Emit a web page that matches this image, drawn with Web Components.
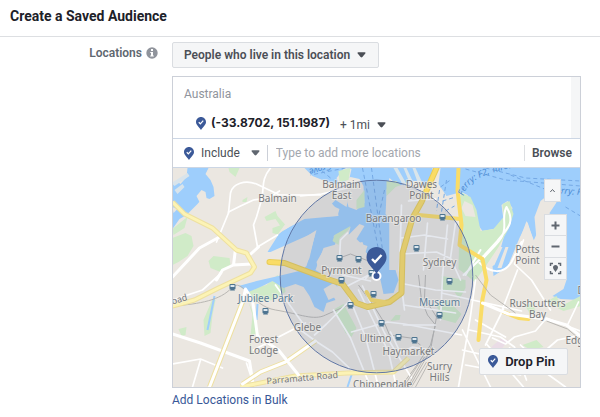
<!DOCTYPE html>
<html lang="en">
<head>
<meta charset="utf-8">
<title>Create a Saved Audience</title>
<style>
body { margin: 0; background: #fff; color: #4b4f56; font: 12px/16px Roboto, "Liberation Sans", sans-serif; }
</style>
</head>
<body>
<audience-page></audience-page>
<script>
function define(name, html) {
  const template = document.createElement('template');
  template.innerHTML = html;
  customElements.define(name, class extends HTMLElement {
    connectedCallback() {
      if (this.shadowRoot) return;
      this.attachShadow({ mode: 'open' }).append(template.content.cloneNode(true));
    }
  });
}

define('pin-icon', `
<style>
:host { display: inline-block; flex: none; width: 10px; height: 13px; }
svg { display: block; width: 100%; height: 100%; }
</style>
<svg viewBox="0 0 20 26" aria-hidden="true">
  <path d="M10 0C4.500 0 0 4.300 0 9.800C0 15.500 5.500 18.500 10 26C14.500 18.500 20 15.500 20 9.800C20 4.300 15.500 0 10 0Z" fill="#3b5998"/>
  <path d="M5.500 10.500L8.700 13.600L14.500 7.200" fill="none" stroke="#fff" stroke-width="2.400"/>
</svg>`);

define('caret-icon', `
<style>
:host { display: inline-block; flex: none; width: 9px; height: 6px; }
svg { display: block; width: 100%; height: 100%; }
</style>
<svg viewBox="0 0 10 6" aria-hidden="true"><path d="M1.500 0H8.500Q10 0 9.200 1.300L6 5.300Q5 6.300 4 5.300L.8 1.300Q0 0 1.500 0Z" fill="currentColor"/></svg>`);

define('page-header', `
<style>
:host { display: block; padding: 8px 10px 11px; border-bottom: 1px solid #dddfe2; }
h1 { margin: 0; font-size: 14px; line-height: 17px; font-weight: 700; color: #1d2129; }
</style>
<h1><slot></slot></h1>`);

define('form-row', `
<style>
:host { display: flex; gap: 14px; padding: 5px 19px 8px 0; }
.label { flex: none; width: 158px; box-sizing: border-box; padding-top: 3px; display: flex; justify-content: flex-end; align-items: flex-start; gap: 4px; font-weight: 600; color: #606770; }
svg { width: 12px; height: 12px; margin-top: 2px; }
.body { flex: 1; min-width: 0; }
</style>
<div class="label"><slot name="label"></slot>
  <svg viewBox="0 0 12 12" aria-hidden="true"><circle cx="6" cy="6" r="5.700" fill="#90949c"/><path d="M5 2h2v2H5zM4.300 5H7v3.500h.8v1H4.200v-1H5V6h-.7z" fill="#fff"/></svg>
</div>
<div class="body"><slot></slot></div>`);

define('menu-button', `
<style>
:host { display: block; margin-bottom: 8px; }
button { font: inherit; font-weight: 600; color: #4b4f56; background: #f5f6f7; border: 1px solid #dadde1; border-radius: 2px; padding: 4px 12px 4px 11px; height: 26px; display: inline-flex; align-items: center; gap: 7px; vertical-align: top; }
</style>
<button type="button" aria-haspopup="menu"><slot></slot><caret-icon></caret-icon></button>`);

define('location-list', `
<style>
:host { display: flex; border-bottom: 1px solid #ccd6e4; }
.items { flex: 1; min-width: 0; padding: 10px 11px 4px; }
.country { line-height: 15px; color: #90949c; }
.place { display: flex; align-items: center; gap: 5px; padding: 10px 0 0 12px; line-height: 18px; }
strong { color: #1d2129; font-size: 12px; font-family: Inter, Roboto, sans-serif; font-weight: 700; }
button { font: inherit; color: #4b4f56; background: none; border: 0; padding: 4px 0 0; margin-left: 5px; display: flex; align-items: center; gap: 7px; }
.track { flex: none; width: 9px; background: #f5f6f7; }
</style>
<div class="items">
  <div class="country">Australia</div>
  <div class="place"><pin-icon></pin-icon><strong>(-33.8702, 151.1987)</strong><button type="button">+ 1mi <caret-icon></caret-icon></button></div>
</div>
<div class="track"></div>`);

define('location-search', `
<style>
:host { display: flex; align-items: center; height: 28px; padding: 0 8px 0 11px; border-bottom: 1px solid #ccd6e4; }
button { font: inherit; color: #4b4f56; background: none; border: 0; padding: 0; display: flex; align-items: center; gap: 7px; }
.mode caret-icon { margin-left: 4px; color: #606770; }
input { flex: 1; min-width: 0; font: inherit; color: #1d2129; border: 0; border-left: 1px solid #ccd0d8; outline: 0; background: none; margin-left: 7px; padding: 0 8px; }
input::placeholder { color: #a3a7ae; opacity: 1; }
.browse { font-weight: 600; border-left: 1px solid #dddfe2; padding-left: 7px; }
</style>
<button type="button" class="mode"><pin-icon></pin-icon>Include<caret-icon></caret-icon></button>
<input type="text" aria-label="Add locations" placeholder="Type to add more locations">
<button type="button" class="browse">Browse</button>`);

define('map-controls', `
<style>
:host { display: flex; flex-direction: column; align-items: flex-start; gap: 12px; color: #606770; }
button { display: grid; place-items: center; width: 23px; height: 22px; padding: 0; background: #f5f6f7; border: 1px solid #dadde1; color: inherit; }
.up { width: 17px; height: 23px; }
.group button + button { border-top: 0; }
svg { display: block; width: 13px; height: 13px; fill: none; stroke: currentColor; stroke-width: 2; }
</style>
<button type="button" class="up" aria-label="Collapse"><svg viewBox="0 0 13 13"><path d="M4.300 8L6.500 5.500L8.700 8" stroke-width="1"/></svg></button>
<div class="group">
  <button type="button" aria-label="Zoom in"><svg viewBox="0 0 13 13"><path d="M2.500 6.500h8M6.500 2.500v8"/></svg></button>
  <button type="button" aria-label="Zoom out"><svg viewBox="0 0 13 13"><path d="M2.500 6.500h8"/></svg></button>
  <button type="button" aria-label="Fit to area"><svg viewBox="0 0 13 13"><path d="M1.500 4V1.500H4M9 1.500h2.500V4M11.500 9v2.500H9M4 11.500H1.500V9" stroke-width="1.500"/><path d="M6.500 3C5 3 4 4 4 5.400C4 7 5.500 8 6.500 10C7.500 8 9 7 9 5.400C9 4 8 3 6.500 3Z" fill="currentColor" stroke="none"/></svg></button>
</div>`);

define('drop-pin-button', `
<style>
:host { display: block; }
button { display: flex; align-items: center; gap: 7px; height: 27px; padding: 0 12px 0 8px; font: inherit; font-size: 13px; font-weight: 600; color: #1d2129; background: #f5f6f7; border: 1px solid #dadde1; border-radius: 2px; }
</style>
<button type="button"><pin-icon></pin-icon><slot></slot></button>`);

define('city-map', `
<style>
:host { display: block; height: 219px; }
svg { display: block; width: 100%; height: 100%; }
.water { fill: #9ecefc; }
.land { fill: #ebe7e1; }
.park { fill: #d0ebc8; }
.road { fill: none; stroke: #fff; stroke-linecap: round; stroke-linejoin: round; }
.thin { stroke-width: 1.700; }
.mid { stroke-width: 3; }
.pale { fill: none; stroke: #eee0a0; stroke-width: 5; stroke-linejoin: round; }
.pale-in { fill: none; stroke: #fcf3b5; stroke-width: 3; stroke-linejoin: round; }
.main { fill: none; stroke: #e9cd57; stroke-width: 6; stroke-linecap: round; stroke-linejoin: round; }
.main-in { fill: none; stroke: #fadc66; stroke-width: 4; stroke-linecap: round; stroke-linejoin: round; }
.rail { fill: none; stroke: #b9b7b3; stroke-width: 1; }
.ferry { fill: none; stroke: #75a9e5; stroke-width: 1; stroke-dasharray: 4 3; }
text { font: 10px "Noto Sans", "Open Sans", sans-serif; fill: #77797c; stroke: #f2f0ec; stroke-opacity: .5; stroke-width: 2px; paint-order: stroke; text-anchor: middle; }
.street { font-size: 9px; }
.transit { fill: #5b7d97; }
.sea { font-size: 9px; fill: #4c8bd3; stroke: none; font-style: italic; }
.st { fill: #4d7490; }
</style>
<svg viewBox="172 168 408 219" preserveAspectRatio="xMidYMid slice" role="img" aria-label="Map of Sydney with a one mile radius around the pin">
  <defs>
    <g id="station"><rect x="-3" y="-3" width="6" height="5.500" rx="1"/><path d="M-2.500 3.500L-1.500 2H1.500L2.500 3.500Z"/><path d="M-2 -2H2V0H-2Z" fill="#dce7ee"/></g>
  </defs>
  <path class="land" d="M-500 -500H1300V1200H-500Z"/>

  <path class="park" d="M172 229L183 220L187 217L184 228L173 235ZM172 238L185 233L191 236L193 246L187 256L178 262L172 265ZM208 261L213 256L229 258L230 265L220 272L210 268ZM264 217L275 211L277 216L285 225L282 229L275 219L266 221ZM272 228L281 225L285 231L279 235L272 233ZM242 200L247 197L246 202L242 202Z"/>
  <path class="park" d="M203 320L212 299L215 300L212 315L210 333L204 336ZM178 329L186 327L185 335L181 336ZM246 290L266 285L277 275L284 283L285 292L273 300L254 302ZM248 302L255 318L258 333L250 335L252 315ZM228 168H239L235 177L229 172ZM250 342L252 355L249 354Z"/>

  <path class="water" d="M172 168H208L205 174L210 180L213 187L214 196L209 199L203 197L197 204L186 215L179 219L172 229Z"/>
  <path class="land" d="M172 168H187L186 177L180 184L176 181L172 184ZM196 196L201 190L205 192L206 198L199 202ZM172 207L177 209L173 213Z"/>
  <path d="M171 183L187 173L189 176L174 186ZM174 190L182 184L184 187L177 194Z" fill="#d9e4eb"/>
  <path class="water" d="M304 168H432L432 184L418 202L400 188L389 178L386 190L386 214L389 218V270H395L398 280L393 293L383 294L380 280L368 262L365 252L362 242L352 244L346 230L336 240L334 246L323 250L316 262L318 270L332 280L338 286L329 290L335 300L326 303L323 312L314 307L309 296L303 287L295 284L283 288L272 281L262 286L248 292L238 286L256 281L278 276L303 270L309 258L315 232L297 240L270 252L267 252L279 233L289 227L304 219L337 216L339 209L330 205L335 200L346 207L348 198L332 192L334 184L322 180L312 176Z"/>
  <path class="land" d="M332 184L342 183L350 177L359 179L363 186L364 203L356 210L348 207L346 198L338 195L331 203L337 210L338 216L305 217L282 231L276 236L300 203L317 192ZM344 168L351 169L349 178L338 183L336 178Z"/>
  <path class="land" d="M323 248L337 244L333 236L350 227L348 235L359 224L364 226L356 239L361 244L367 246L365 252L374 262L378 280L382 293L376 309L338 305L337 286L328 278L315 270Z"/>
  <path class="land" d="M275 256L316 230L306 266L301 270L278 271ZM323 289L333 283L337 287L330 291L337 296L328 300Z"/>
  <path class="park" d="M332 241L334 235L350 226L348 230L339 238L338 245ZM338 171L350 168L348 180L339 182ZM356 200L364 190L364 207L356 209ZM386 181L396 181L403 188L393 198L386 195ZM386 208L393 210L391 218L386 216Z"/>
  <path class="land" d="M386 196L395 187L412 181L421 181L425 190L430 198L435 202V270H389V218L385 214Z"/>
  <path d="M393 168L397 168L406 184L403 186ZM403 168H406L413 183L410 185ZM412 168H415L421 181L417 182Z" fill="#dae5ea"/>

  <path class="water" d="M440 168H580V300L560 299L552 296L563 289L566 280L560 258L549 265L537 232L533 241L527 222L519 238L507 267L493 276L492 266L500 249L507 224L512 208L507 201L501 205L503 220L493 229L482 231L477 224L472 207L467 195L461 192L446 196L438 184Z"/>
  <path class="land" d="M540 201L550 193L562 191L555 204L549 213L553 222L563 238L562 282L550 281L540 258L536 239L534 217Z"/>
  <path class="land" d="M526 221L534 242L541 262L548 288L493 288L496 276L509 264L519 240ZM498 247L502 247L494 265L490 267ZM505 247H508L501 268H497Z"/>
  <path class="park" d="M461 193L470 197L476 210L480 231L493 229L503 217L502 204L509 201L513 214L508 229L498 247L486 265L474 282L466 275L458 269L459 223L458 201Z"/>
  <path class="land" d="M464 201L472 205L475 217L465 216L461 208Z"/>
  <path class="park" d="M334 309L343 304L356 328L351 337L345 333ZM441 276L465 280V288L459 299L454 292L441 290ZM436 304L447 300L461 314L455 323L440 319ZM525 306L530 315L535 310L531 303ZM545 302L556 296L562 308L551 305ZM557 308L580 296V306L563 311ZM522 345L536 340L543 347L530 350ZM395 315L400 315L399 320L390 321Z"/>
  <path d="M491 347L500 339L508 340L501 349L495 354Z" fill="#eadce6"/>
  <path d="M214 296L207 330M257 304L256 320M352 372L347 387" stroke="#9ecefc" fill="none" stroke-width="2"/>

  <path class="rail" d="M172 306C200 304 220 300 231 288S250 306 275 310S313 321 325 315L350 304"/>
  <path class="rail" d="M339 258L350 254L368 261M358 285L374 307L384 323L389 335L410 338L420 345M418 275L421 300L427 315L435 325L430 345L415 367L400 387M425 275L424 298L436 317L430 350L409 387" stroke-width="2"/>
  <g class="road thin">
    <path d="M270 168C260 180 264 188 261 200L256 217L253 225L257 247"/>
    <path d="M228 213L230 193C232 183 245 180 256 184L279 195L320 195"/>
    <path d="M228 212L240 206L253 200L268 198L279 191"/>
    <path d="M228 213L216 242M257 247L277 235M300 196L321 194L347 188"/>
    <path d="M172 300L202 290L221 273M172 364L200 359L222 368M200 360L192 387M246 363L254 387"/>
    <path d="M275 285L302 323M314 335L326 324L350 300M253 350L305 323M300 330L315 341L332 352L354 373"/>
    <path d="M333 310L350 338L370 387M344 286L365 337L378 387M358 290L388 352L396 387M362 286L384 333L411 378"/>
    <path d="M347 286L378 270M375 265L365 279M342 275L370 281M339 258L340 240L347 233M351 332L387 322L404 324L461 335M390 332L400 353L412 347L428 350"/>
    <path d="M401 205L399 270L404 310M427 223L423 270M401 238L424 235L447 239M401 254L436 252L449 258M404 284L435 290L465 292M403 305L455 313M403 325L435 325M455 223L450 258L460 280M447 225L442 276L440 320M408 201L435 199"/>
    <path d="M462 330L490 387M475 280L470 316L458 387M441 293L481 302L521 311M503 309L485 345M469 330L500 337L514 347L526 380M475 320L505 337M462 350L540 368M465 365L520 375M517 270L502 309M523 240L514 264L531 280L550 310"/>
    <path d="M492 338L505 344L514 337L535 331L546 318L580 331M509 348L540 369L565 387M520 345L535 359L557 340L580 335M567 325L578 302M486 344L523 387"/>
  </g>
  <g class="road mid">
    <path d="M172 277L199 248L219 237"/>
    <path d="M235 249L233 265L251 264M233 265L222 270L216 280M172 334L200 343L249 361L253 387M249 255L258 247"/>
  </g>
  <path class="road" d="M506 207C516 224 505 230 496 242L484 255L463 275M506 207C499 220 511 229 495 245L482 259M480 250L465 275M479 263C490 273 503 275 511 262L521 242" stroke-width="2"/>
  <path class="pale" d="M172 202L184 214L212 228L236 250L246 253L254 267L250 273L218 288L194 300L172 306"/>
  <path class="pale-in" d="M172 202L184 214L212 228L236 250L246 253L254 267L250 273L218 288L194 300L172 306"/>
  <path class="pale" d="M240 387L295 376L347 373L393 372L408 358"/>
  <path class="pale" d="M242 384L260 372L285 362L315 341M209 387L242 302"/>
  <path class="pale-in" d="M240 387L295 376L347 373L393 372L408 358"/>
  <path class="road mid" d="M242 384L260 372L285 362L315 341"/>
  <path class="road mid" d="M209 387L242 302L245 289L252 300L257 336L278 350L298 375"/>
  <path class="main" d="M269 262L284 263L327 279L342 284L356 303L367 307L389 302L401 293L402 253L412 218L421 202L436 168"/>
  <path class="main-in" d="M269 262L284 263L327 279L342 284L356 303L367 307L389 302L401 293L402 253L412 218L421 202L436 168"/>
  <path class="main-in" d="M418 215L460 219" stroke-width="3"/>
  <path class="main-in" d="M458 168L457 190L461 225L459 245L482 259L486 280L482 299L478 340M503 312L518 318L528 319"/>
  <path class="main-in" d="M366 292L371 300L384 302" stroke-width="3"/>
  <path class="road mid" d="M482 303L508 314L545 319L566 325L580 336"/>
  <path class="rail" d="M475 275L490 295L515 313M546 321L567 329L580 340" stroke-width="2"/>
  <path d="M403 387L420 361M407 387L424 357M411 387L426 362M415 387L427 365" stroke="#bbb9b6" stroke-width="1" fill="none"/>
  <g class="ferry">
    <path d="M362 168L381 265M371 168L382 250M384 190L375 230M345 168L310 175M440 187L450 180M442 201L455 197M445 211L454 206M439 190L436 211M446 180L441 212M465 169L505 180L580 186M485 168L525 178L580 181M510 175L549 191M565 207L580 216M330 178L318 168"/>
  </g>

  <circle cx="376" cy="276.500" r="96.300" fill="#637799" fill-opacity=".17" stroke="#6077a6"/>

  <g class="st">
    <use href="#station" x="339" y="258"/><use href="#station" x="358" y="259"/><use href="#station" x="341" y="280"/>
    <use href="#station" x="373" y="294"/><use href="#station" x="350" y="305"/><use href="#station" x="381" y="323"/>
    <use href="#station" x="398" y="337"/><use href="#station" x="414" y="340"/><use href="#station" x="416" y="248"/>
    <use href="#station" x="442" y="217"/><use href="#station" x="449" y="281"/><use href="#station" x="439" y="315"/>
    <use href="#station" x="232" y="287"/><use href="#station" x="265" y="311"/><use href="#station" x="371" y="273"/>
  </g>

  <text x="277" y="202">Balmain</text>
  <text x="341" y="188">Balmain</text><text x="341" y="199">East</text>
  <text x="421" y="188">Dawes</text><text x="421" y="199">Point</text>
  <text x="393" y="222">Barangaroo</text>
  <text x="341" y="274">Pyrmont</text>
  <text x="439" y="266">Sydney</text>
  <text x="527" y="253">Potts</text><text x="527" y="264">Point</text>
  <text class="transit" x="265" y="302">Jubilee Park</text>
  <text class="transit" x="439" y="306">Museum</text>
  <text x="307" y="331">Glebe</text>
  <text x="263" y="343">Forest</text><text x="263" y="354">Lodge</text>
  <text x="375" y="342">Ultimo</text>
  <text x="408" y="355">Haymarket</text>
  <text x="439" y="370">Surry</text><text x="439" y="381">Hills</text>
  <text x="537" y="307">Rushcutters</text><text x="537" y="318">Bay</text>
  <text x="565" y="344" style="text-anchor: start">Edg</text>
  <text x="577" y="294" style="text-anchor: start">D</text>
  <text x="382" y="388">Chippendale</text>
  <text class="street" x="302" y="381" transform="rotate(-5 302 381)">Parramatta Road</text>
  <text class="street" x="177" y="303" transform="rotate(-16 177 303)">Road</text>
  <text class="sea" x="320" y="172" transform="rotate(164 320 169)">Grove</text>
  <path id="ferry-line" d="M463 196C467 180 483 174 515 167" fill="none"/>
  <text class="sea" style="text-anchor: start"><textPath href="#ferry-line">Ferry: F2, Taronga</textPath></text>
  <text class="sea" x="566" y="194" transform="rotate(4 566 194)">Ferry: F</text>

  <circle cx="376" cy="276" r="4" fill="#3b5998" stroke="#fff" stroke-width="2"/>
  <path d="M376 247C370 247 366 251.500 366 257.500C366 264 372 267 376 274C380 267 386 264 386 257.500C386 251.500 382 247 376 247Z" fill="#3b5998"/>
  <path d="M371.500 259L374.500 262L381 255" fill="none" stroke="#fff" stroke-width="2.400"/>
</svg>`);

define('location-panel', `
<style>
:host { display: block; border: 1px solid #ccd0d8; }
.map { position: relative; overflow: hidden; }
map-controls { position: absolute; top: 11px; right: 13px; }
drop-pin-button { position: absolute; right: 12px; bottom: 12px; }
</style>
<location-list></location-list>
<location-search></location-search>
<div class="map">
  <city-map></city-map>
  <map-controls></map-controls>
  <drop-pin-button>Drop Pin</drop-pin-button>
</div>`);

define('audience-page', `
<style>
:host { display: block; }
a { display: inline-block; margin-top: 4px; line-height: 16px; color: #385898; text-decoration: none; }
</style>
<page-header>Create a Saved Audience</page-header>
<main>
  <form-row>
    <span slot="label">Locations</span>
    <menu-button>People who live in this location</menu-button>
    <location-panel></location-panel>
    <a href="#bulk">Add Locations in Bulk</a>
  </form-row>
</main>`);
</script>
</body>
</html>
